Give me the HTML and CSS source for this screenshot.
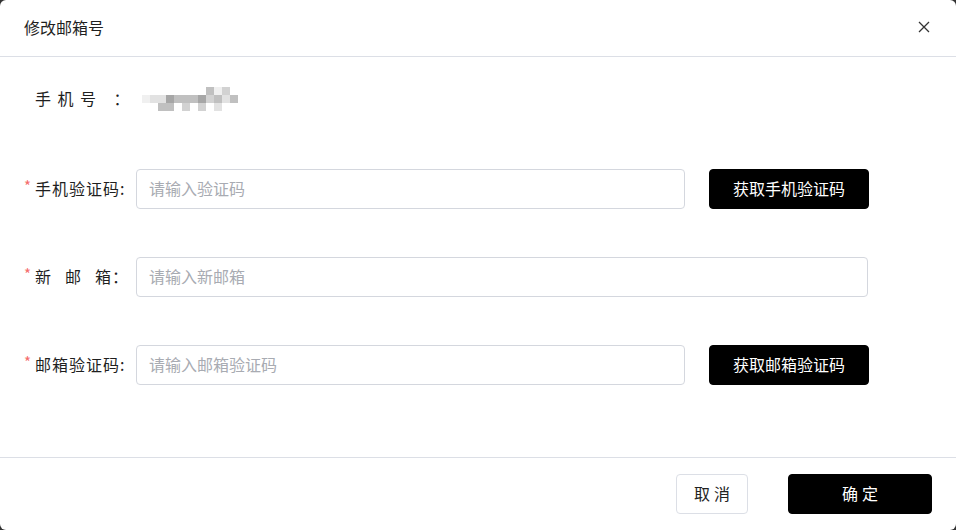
FILE: index.html
```html
<!DOCTYPE html>
<html lang="zh-CN">
<head>
  <meta charset="UTF-8">
  <title>修改邮箱号</title>
  <link rel="stylesheet" href="styles.css">
</head>
<body>
  <div class="dialog">
    <div class="dialog-header">
      <span class="dialog-title">修改邮箱号</span>
      <button class="close-btn" type="button" aria-label="关闭">
        <svg width="12" height="12" viewBox="0 0 12 12"><path d="M1 1L11 11M11 1L1 11" stroke="#333" stroke-width="1.3" fill="none"/></svg>
      </button>
    </div>

    <div class="dialog-body">
      <div class="form-row row-first">
        <label class="form-label"><span class="spread-sm">手机号</span><span class="colon-gap">：</span></label>
        <div class="masked">
          <span></span><span></span><span></span><span></span><span></span><span></span><span></span><span></span><span class="s4"></span><span class="s1"></span><span class="s3"></span><span></span>
          <span class="s1"></span><span class="s2"></span><span class="s2"></span><span class="s5"></span><span class="s4"></span><span class="s4"></span><span class="s4"></span><span class="s5"></span><span class="s3"></span><span class="s4"></span><span class="s2"></span><span class="s4"></span>
          <span></span><span></span><span class="s4"></span><span class="s4"></span><span></span><span class="s3"></span><span></span><span class="s3"></span><span></span><span class="s2"></span><span></span><span></span>
        </div>
      </div>

      <div class="form-row">
        <label class="form-label required">手机验证码:</label>
        <input class="text-input input-short" type="text" placeholder="请输入验证码">
        <button class="btn btn-dark btn-code" type="button">获取手机验证码</button>
      </div>

      <div class="form-row">
        <label class="form-label required"><span class="spread-lg">新邮</span>箱：</label>
        <input class="text-input input-long" type="text" placeholder="请输入新邮箱">
      </div>

      <div class="form-row">
        <label class="form-label required">邮箱验证码:</label>
        <input class="text-input input-short" type="text" placeholder="请输入邮箱验证码">
        <button class="btn btn-dark btn-code" type="button">获取邮箱验证码</button>
      </div>
    </div>

    <div class="dialog-footer">
      <button class="btn btn-plain btn-cancel" type="button">取消</button>
      <button class="btn btn-dark btn-ok" type="button">确定</button>
    </div>
  </div>
</body>
</html>
```

FILE: styles.css
```css
* { box-sizing: border-box; }
html, body { margin: 0; height: 100%; }
body { background: #333; font-family: "Noto Sans CJK SC", "Noto Sans", sans-serif; color: #303133; }

.dialog { width: 956px; height: 530px; background: #fff; border-radius: 6px; overflow: hidden; }

.dialog-header { height: 57px; padding: 0 24px 2px; display: flex; align-items: center; justify-content: space-between; border-bottom: 1px solid #dcdfe6; }
.dialog-title { font-size: 16px; color: #1f1f1f; }
.close-btn { border: 0; background: none; padding: 0; width: 12px; height: 12px; margin-right: 2px; cursor: pointer; display: flex; }

.dialog-body { padding: 22px 24px 72px; height: 400px; }
.form-row { display: flex; align-items: center; height: 40px; margin-bottom: 48px; }
.form-row.row-first { margin-bottom: 50px; }
.form-row:last-child { margin-bottom: 0; }

.form-label { width: 112px; padding-left: 11px; padding-bottom: 3px; font-size: 16px; color: #1f1f1f; letter-spacing: 1px; white-space: nowrap; position: relative; }
.form-label.required::before { content: "*"; color: #f56c6c; position: absolute; left: 0; top: -1px; font-size: 15px; letter-spacing: 0; }
.spread-sm { letter-spacing: 6.5px; }
.spread-lg { letter-spacing: 14px; }
.colon-gap { margin-left: 11px; }

.masked { display: grid; grid-template-columns: repeat(12, 8px); grid-template-rows: repeat(3, 8px); margin-left: 6px; }
.masked span { background: transparent; }
.masked .s1 { background: #f0f0f0; }
.masked .s2 { background: #e2e2e2; }
.masked .s3 { background: #d2d2d2; }
.masked .s4 { background: #c0c0c0; }
.masked .s5 { background: #a6a6a6; }

.text-input { height: 40px; border: 1px solid #d4d7de; border-radius: 4px; padding: 0 12px 3px; font-size: 16px; font-family: inherit; color: #303133; outline: none; }
.text-input::placeholder { color: #a8abb2; }
.input-short { width: 549px; }
.input-long { width: 732px; }

.btn { height: 40px; border-radius: 4px; font-size: 16px; font-family: inherit; cursor: pointer; padding: 0 0 3px; }
.btn-dark { background: #000; color: #fff; border: 1px solid #000; }
.btn-plain { background: #fff; color: #222; border: 1px solid #dcdfe6; }
.btn-code { width: 160px; margin-left: 24px; }

.dialog-footer { height: 73px; padding: 16px 24px; display: flex; justify-content: flex-end; border-top: 1px solid #dcdfe6; }
.btn-cancel { width: 72px; letter-spacing: 4px; padding-left: 4px; }
.btn-ok { width: 144px; margin-left: 40px; letter-spacing: 4px; padding-left: 4px; }
```
